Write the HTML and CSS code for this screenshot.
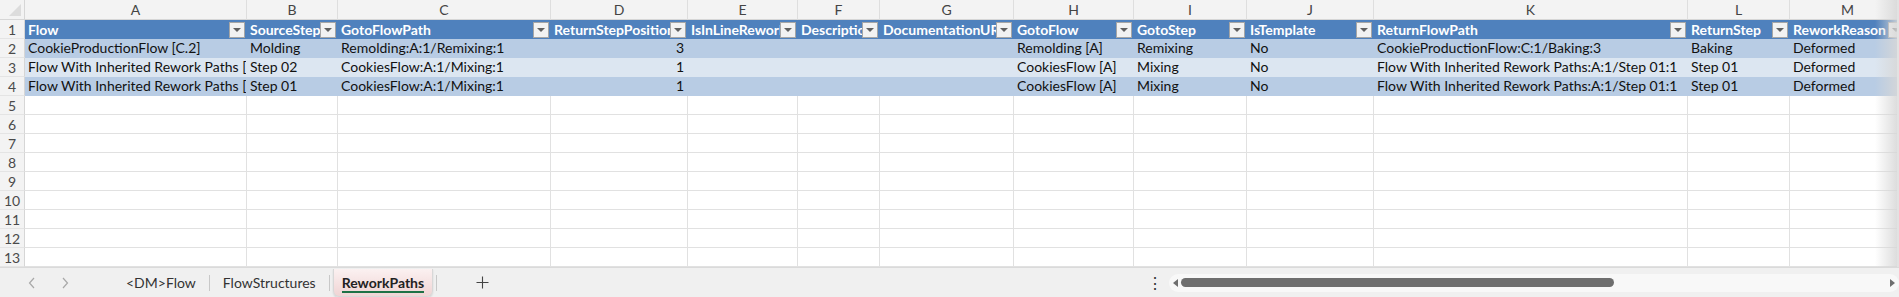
FILE: index.html
```html
<!DOCTYPE html>
<html lang="en">
<head>
  <meta charset="UTF-8">
  <title>ReworkPaths</title>
  <link rel="stylesheet" href="styles.css">
</head>
<body>

  <div class="sheet" id="sheet"></div>

  <div class="tabbar">
    <div class="nav">
      <svg width="8" height="12" viewBox="0 0 8 12"><polyline points="6,1 1.5,6 6,11" fill="none" stroke="#a8a8a8" stroke-width="1.2"/></svg>
      <svg width="8" height="12" viewBox="0 0 8 12"><polyline points="2,1 6.5,6 2,11" fill="none" stroke="#a8a8a8" stroke-width="1.2"/></svg>
    </div>
    <div class="tabs">
      <span class="tab">&lt;DM&gt;Flow</span>
      <span class="sep"></span>
      <span class="tab">FlowStructures</span>
      <span class="sep"></span>
      <span class="tab active">ReworkPaths</span>
      <span class="sep"></span>
      <svg class="add" width="13" height="13" viewBox="0 0 13 13"><path d="M6.5 0.5v12M0.5 6.5h12" stroke="#444" stroke-width="1.1"/></svg>
    </div>
    <div class="dots">&#8942;</div>
    <div class="hscroll">
      <span class="arrow left"></span>
      <span class="thumb"></span>
      <span class="arrow right"></span>
    </div>
  </div>

  <script>
    const letters = ["A","B","C","D","E","F","G","H","I","J","K","L","M"];
    const rows = [
      ["Flow","SourceStep","GotoFlowPath","ReturnStepPosition","IsInLineRework","Description","DocumentationURL","GotoFlow","GotoStep","IsTemplate","ReturnFlowPath","ReturnStep","ReworkReason"],
      ["CookieProductionFlow [C.2]","Molding","Remolding:A:1/Remixing:1","3","","","","Remolding [A]","Remixing","No","CookieProductionFlow:C:1/Baking:3","Baking","Deformed"],
      ["Flow With Inherited Rework Paths [","Step 02","CookiesFlow:A:1/Mixing:1","1","","","","CookiesFlow [A]","Mixing","No","Flow With Inherited Rework Paths:A:1/Step 01:1","Step 01","Deformed"],
      ["Flow With Inherited Rework Paths [","Step 01","CookiesFlow:A:1/Mixing:1","1","","","","CookiesFlow [A]","Mixing","No","Flow With Inherited Rework Paths:A:1/Step 01:1","Step 01","Deformed"]
    ];
    const sheet = document.getElementById("sheet");

    function cell(cls, text) {
      const d = document.createElement("div");
      d.className = cls;
      if (text) d.textContent = text;
      sheet.appendChild(d);
      return d;
    }

    // column letters
    cell("corner");
    letters.forEach(l => cell("colhead", l));

    // rows 1..13
    for (let r = 0; r < 13; r++) {
      cell("rowhead", String(r + 1));
      letters.forEach((l, c) => {
        const data = rows[r];
        let cls = "cell";
        if (r === 0) cls += " th";
        else if (data) cls += r % 2 ? " band1" : " band2";
        const v = data ? data[c] : "";
        if (r > 0 && v !== "" && !isNaN(v)) cls += " num";
        const d = cell(cls);
        const s = document.createElement("span");
        s.className = "txt";
        s.textContent = v;
        d.appendChild(s);
        if (r === 0) {
          const f = document.createElement("span");
          f.className = "filter";
          d.appendChild(f);
        }
      });
    }
  </script>
</body>
</html>
```

FILE: styles.css
```css
body {
  margin: 0;
  width: 1899px;
  height: 297px;
  overflow: hidden;
  background: #ffffff;
  font-family: Lato, "Liberation Sans", sans-serif;
  position: relative;
}

.sheet {
  display: grid;
  grid-template-columns: 25px 222px 91px 213px 137px 110px 82px 134px 120px 113px 127px 314px 102px 116px;
  grid-template-rows: 20px;
  grid-auto-rows: 19px;
  height: 267px;
  overflow: hidden;
  position: relative;
}

/* soft fade at the right edge of the grid */
.sheet::after {
  content: "";
  position: absolute;
  top: 0;
  right: 0;
  width: 22px;
  height: 267px;
  background: linear-gradient(to right, rgba(235,235,235,0), rgba(215,215,215,0.85));
  border-right: 2px solid #e2e2e2;
}

.corner {
  background: #f3f3f3;
  border-right: 1px solid #d6d6d6;
  border-bottom: 1px solid #d6d6d6;
  position: relative;
}

.corner::after {
  content: "";
  position: absolute;
  right: 3px;
  bottom: 3px;
  border-left: 12px solid transparent;
  border-bottom: 12px solid #dcdcdc;
}

.colhead {
  background: #f3f3f3;
  color: #444;
  font-size: 14px;
  text-align: center;
  line-height: 19px;
  border-right: 1px solid #dedede;
  border-bottom: 1px solid #d6d6d6;
}

.rowhead {
  background: #f3f3f3;
  color: #4a4a4a;
  font-size: 14px;
  text-align: center;
  line-height: 19px;
  border-right: 1px solid #d6d6d6;
  border-bottom: 1px solid #e4e4e4;
}

.cell {
  box-sizing: border-box;
  border-right: 1px solid #e1e1e1;
  border-bottom: 1px solid #e1e1e1;
  font-size: 14px;
  line-height: 18px;
  color: #111;
  white-space: nowrap;
  overflow: hidden;
  padding-left: 3px;
  position: relative;
}

.cell.num {
  text-align: right;
  padding-right: 3px;
}

.cell.th {
  background: #4f81bd;
  border-color: #4f81bd;
  color: #ffffff;
  font-weight: bold;
  line-height: 19px;
}

.cell.band1 {
  background: #b8cce4;
  border-color: #b8cce4;
}

.cell.band2 {
  background: #dce6f1;
  border-color: #dce6f1;
}

.filter {
  position: absolute;
  right: 1px;
  top: 2px;
  width: 14px;
  height: 14px;
  background: #f2f2f2;
  border: 1px solid #a6a6a6;
}

.filter::after {
  content: "";
  position: absolute;
  left: 3px;
  top: 5px;
  border-left: 4px solid transparent;
  border-right: 4px solid transparent;
  border-top: 4px solid #606060;
}

/* sheet tabs */
.tabbar {
  height: 29px;
  border-top: 1px solid #dadada;
  background: #f0f0f0;
  display: flex;
  align-items: center;
  font-size: 14px;
  color: #333;
}

.nav {
  width: 120px;
  display: flex;
  align-items: center;
  gap: 25px;
  padding-left: 28px;
  box-sizing: border-box;
}

.tabs {
  display: flex;
  align-items: center;
  height: 29px;
  width: 1020px;
}

.tab {
  padding: 0 6px;
  line-height: 27px;
}

.sep {
  width: 1px;
  height: 16px;
  background: #c8c8c8;
  margin: 0 7px;
}

.tab.active {
  font-weight: bold;
  color: #222;
  background: linear-gradient(#fbf1f1, #f0d4d4);
  border: 1px solid #d8d8d8;
  border-top: none;
  border-radius: 0 0 6px 6px;
  box-shadow: 0 1px 2px rgba(0,0,0,0.12);
  padding: 0 8px;
  height: 27px;
  margin: 0 -4px;
  position: relative;
}

.tab.active::after {
  content: "";
  position: absolute;
  left: 8px;
  right: 8px;
  bottom: 3px;
  height: 2px;
  background: #1e7145;
}

.add {
  margin-left: 32px;
}

.dots {
  width: 16px;
  font-size: 16px;
  color: #333;
  margin-left: 7px;
}

.hscroll {
  margin-left: 6px;
  width: 730px;
  height: 18px;
  background: #f8f8f8;
  border-radius: 9px;
  display: flex;
  align-items: center;
  padding: 0 4px;
  box-sizing: border-box;
  gap: 3px;
}

.thumb {
  width: 433px;
  height: 9px;
  background: #6e6e6e;
  border-radius: 5px;
}

.arrow {
  width: 0;
  height: 0;
  border-top: 4px solid transparent;
  border-bottom: 4px solid transparent;
}

.arrow.left {
  border-right: 5px solid #6e6e6e;
}

.arrow.right {
  border-left: 5px solid #6e6e6e;
  margin-left: auto;
}
```
